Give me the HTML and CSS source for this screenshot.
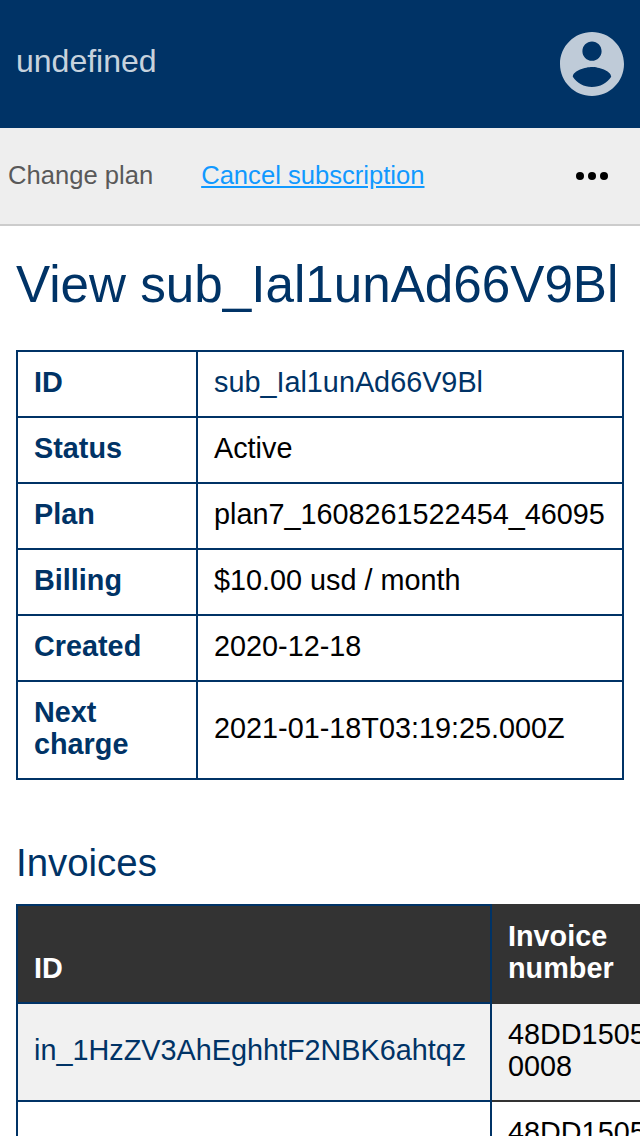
FILE: index.html
```html
<!DOCTYPE html>
<html lang="en">
<head>
<meta charset="utf-8">
<title>View subscription</title>
<link rel="stylesheet" href="styles.css">
</head>
<body>
<header class="header">
  <span class="brand">undefined</span>
  <svg class="account-icon" viewBox="2 2 20 20" aria-label="Account"><path d="M12 2C6.48 2 2 6.48 2 12s4.48 10 10 10 10-4.48 10-10S17.52 2 12 2zm0 3c1.66 0 3 1.34 3 3s-1.34 3-3 3-3-1.34-3-3 1.34-3 3-3zm0 14.200c-2.500 0-4.710-1.280-6-3.220.030-1.990 4-3.080 6-3.080 1.990 0 5.970 1.090 6 3.080-1.290 1.940-3.500 3.220-6 3.220z"/></svg>
</header>
<nav class="navbar">
  <span class="nav-current">Change plan</span>
  <a class="nav-link" href="#">Cancel subscription</a>
  <svg class="more-icon" viewBox="0 0 32 8" aria-label="More"><circle cx="4" cy="4" r="4"/><circle cx="16" cy="4" r="4"/><circle cx="28" cy="4" r="4"/></svg>
</nav>
<main class="content">
  <h1 class="title">View sub_Ial1unAd66V9Bl</h1>
  <table class="table details">
    <colgroup><col class="label-column"><col></colgroup>
    <tbody>
      <tr><th>ID</th><td><a class="record-link" href="#">sub_Ial1unAd66V9Bl</a></td></tr>
      <tr><th>Status</th><td>Active</td></tr>
      <tr><th>Plan</th><td>plan7_1608261522454_46095</td></tr>
      <tr><th>Billing</th><td>$10.00 usd / month</td></tr>
      <tr><th>Created</th><td>2020-12-18</td></tr>
      <tr><th>Next charge</th><td>2021-01-18T03:19:25.000Z</td></tr>
    </tbody>
  </table>
  <h2 class="subtitle">Invoices</h2>
  <table class="table invoices">
    <colgroup><col class="id-column"><col></colgroup>
    <thead>
      <tr><th>ID</th><th class="number">Invoice<br>number</th></tr>
    </thead>
    <tbody>
      <tr class="striped"><td><a class="record-link" href="#">in_1HzZV3AhEghhtF2NBK6ahtqz</a></td><td class="number">48DD1505-<br>0008</td></tr>
      <tr><td></td><td class="number">48DD1505-<br></td></tr>
    </tbody>
  </table>
</main>
</body>
</html>
```
FILE: styles.css
```css
* { box-sizing: border-box; }

html, body {
  height: 1136px;
  overflow: hidden;
}

body {
  margin: 0;
  background: #fff;
  color: #000;
  font-family: "Liberation Sans", Arial, sans-serif;
}

.header {
  display: flex;
  align-items: center;
  justify-content: space-between;
  height: 128px;
  padding: 0 16px;
  background: #036;
}

.brand {
  padding-bottom: 6px;
  color: rgba(255, 255, 255, .8);
  font-size: 32px;
  line-height: 36px;
}

.account-icon {
  width: 64px;
  height: 64px;
  fill: rgba(255, 255, 255, .75);
}

.navbar {
  display: flex;
  align-items: center;
  height: 98px;
  padding: 0 32px 0 8px;
  border-bottom: 2px solid #ccc;
  background: #eee;
  font-size: 25.6px;
  line-height: 30px;
}

.nav-current {
  margin-right: 48px;
  padding-bottom: 2px;
  color: #595959;
}

.nav-link {
  padding-bottom: 2px;
  color: #19f;
}

.more-icon {
  width: 32px;
  height: 8px;
  margin-left: auto;
}

.content { padding: 29px 16px 0; }

.title, .subtitle {
  margin: 0;
  color: #036;
  font-weight: 400;
  white-space: nowrap;
}

.title {
  margin-bottom: 35px;
  font-size: 51.2px;
  line-height: 60px;
}

.subtitle {
  margin: 61px 0 19px;
  font-size: 38.4px;
  line-height: 44px;
}

.table {
  border-collapse: collapse;
  table-layout: fixed;
  font-size: 28.8px;
  line-height: 32px;
}

.table th, .table td {
  padding: 14px 16px 18px;
  border: 2px solid #036;
  text-align: left;
}

.details { width: 608px; }
.details th { color: #036; }
.label-column { width: 180px; }
.record-link { color: #036; text-decoration: none; }

.invoices { width: 700px; }
.id-column { width: 474px; }

.invoices th {
  background: #333;
  color: #fff;
  vertical-align: bottom;
}

.invoices .number {
  border-top-color: #333;
  border-bottom-color: #333;
}

.striped { background: #f1f1f1; }
```
